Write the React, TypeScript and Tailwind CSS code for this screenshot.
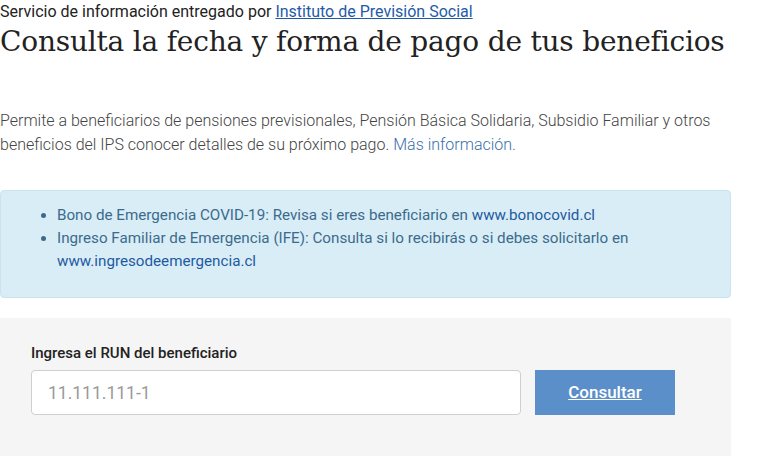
const App = () => {
  return (
    <div className="w-[759px] h-[456px] overflow-hidden bg-white font-['Roboto',sans-serif]">
      <div className="w-[731px]">
        <p className="text-[16px] leading-[22px] text-[#222] pt-[1px]">
          Servicio de información entregado por{" "}
          <a href="#" className="text-[#1f5ca8] underline">Instituto de Previsión Social</a>
        </p>
        <h1 className="font-['DejaVu_Serif',serif] text-[28px] leading-[38px] text-[#222] tracking-[-0.2px]">
          Consulta la fecha y forma de pago de tus beneficios
        </h1>

        <p className="mt-[48px] text-[16px] leading-[24px] font-light text-[#444]">
          Permite a beneficiarios de pensiones previsionales, Pensión Básica Solidaria, Subsidio Familiar y otros
          beneficios del IPS conocer detalles de su próximo pago.{" "}
          <a href="#" className="text-[#3b6fa8]">Más información.</a>
        </p>

        <div className="mt-[33px] h-[108px] rounded-[4px] border border-[#c7e4ef] bg-[#d9edf7] pt-[13px] pl-[37px] pr-4 text-[15.2px] leading-[23px] text-[#3b6b8c]">
          <ul className="list-disc pl-[19px] marker:text-[#3b6b8c]">
            <li>
              Bono de Emergencia COVID-19: Revisa si eres beneficiario en{" "}
              <a href="#" className="text-[#1f5aa0]">www.bonocovid.cl</a>
            </li>
            <li>
              Ingreso Familiar de Emergencia (IFE): Consulta si lo recibirás o si debes solicitarlo en{" "}
              <a href="#" className="text-[#1f5aa0]">www.ingresodeemergencia.cl</a>
            </li>
          </ul>
        </div>

        <div className="mt-[20px] h-[140px] bg-[#f5f5f5] pt-[25px] pl-[31px]">
          <label className="block text-[15px] leading-[20px] font-medium text-[#222]">
            Ingresa el RUN del beneficiario
          </label>
          <div className="mt-[7px] flex items-start gap-[14px]">
            <input
              type="text"
              placeholder="11.111.111-1"
              className="w-[490px] h-[45px] rounded-[4px] border border-[#cfcfcf] bg-white px-[16px] text-[17.5px] text-[#333] placeholder:text-[#9a9a9a] outline-none"
            />
            <button className="w-[140px] h-[45px] bg-[#5b8fc9] text-white text-[17px] font-medium underline">
              Consultar
            </button>
          </div>
        </div>
      </div>
    </div>
  );
};

export default App;
